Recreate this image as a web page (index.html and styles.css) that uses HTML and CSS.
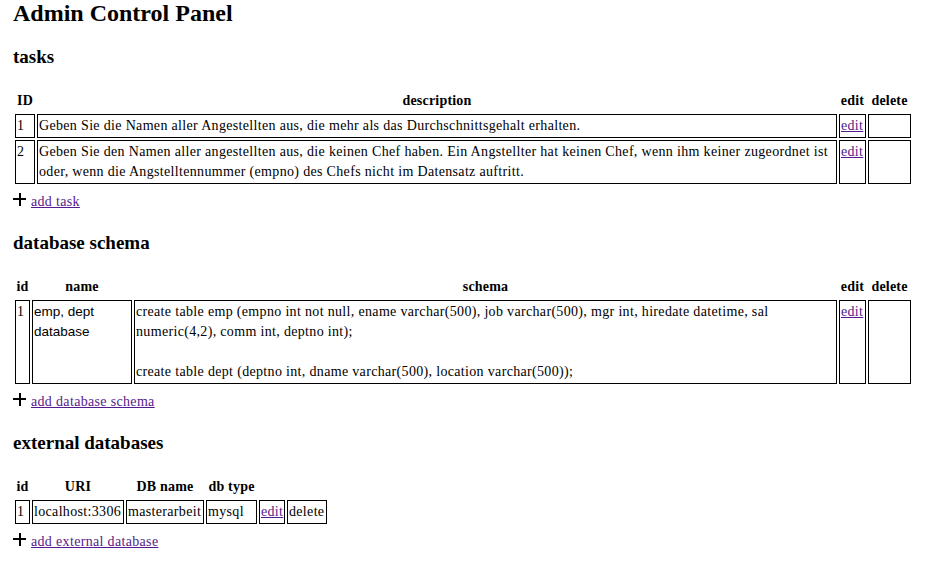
FILE: index.html
```html
<!DOCTYPE html>
<html lang="de">
<head>
<meta charset="utf-8">
<title>Admin Control Panel</title>
<link rel="stylesheet" href="styles.css">
</head>
<body>
<h1 class="title">Admin Control Panel</h1>

<h2 class="section-title">tasks</h2>
<table class="grid grid-wide">
  <thead>
    <tr>
      <th class="w-id1">ID</th>
      <th class="w-desc">description</th>
      <th class="w-edit">edit</th>
      <th class="w-del">delete</th>
    </tr>
  </thead>
  <tbody>
    <tr>
      <td>1</td>
      <td>Geben Sie die Namen aller Angestellten aus, die mehr als das Durchschnittsgehalt erhalten.</td>
      <td><a href="#" class="link">edit</a></td>
      <td></td>
    </tr>
    <tr>
      <td>2</td>
      <td>Geben Sie den Namen aller angestellten aus, die keinen Chef haben. Ein Angstellter hat keinen Chef, wenn ihm keiner zugeordnet ist oder, wenn die Angstelltennummer (empno) des Chefs nicht im Datensatz auftritt.</td>
      <td><a href="#" class="link">edit</a></td>
      <td></td>
    </tr>
  </tbody>
</table>
<p class="add"><svg class="plus" width="13" height="13" viewBox="0 0 13 13"><rect x="6" y="0" width="2" height="13" fill="#000"/><rect x="0" y="5" width="13" height="2" fill="#000"/></svg><a href="#" class="link">add task</a></p>

<h2 class="section-title">database schema</h2>
<table class="grid grid-wide">
  <thead>
    <tr>
      <th class="w-id2">id</th>
      <th class="w-name">name</th>
      <th>schema</th>
      <th class="w-edit">edit</th>
      <th class="w-del">delete</th>
    </tr>
  </thead>
  <tbody>
    <tr>
      <td>1</td>
      <td class="sans">emp, dept database</td>
      <td>create table emp (empno int not null, ename varchar(500), job varchar(500), mgr int, hiredate datetime, sal numeric(4,2), comm int, deptno int);<br><br>create table dept (deptno int, dname varchar(500), location varchar(500));</td>
      <td><a href="#" class="link">edit</a></td>
      <td></td>
    </tr>
  </tbody>
</table>
<p class="add"><svg class="plus" width="13" height="13" viewBox="0 0 13 13"><rect x="6" y="0" width="2" height="13" fill="#000"/><rect x="0" y="5" width="13" height="2" fill="#000"/></svg><a href="#" class="link">add database schema</a></p>

<h2 class="section-title">external databases</h2>
<table class="grid grid-small">
  <thead>
    <tr>
      <th class="w-id2">id</th>
      <th class="w-uri">URI</th>
      <th class="w-dbname">DB name</th>
      <th class="w-dbtype">db type</th>
      <th class="w-edit3"></th>
      <th class="w-del3"></th>
    </tr>
  </thead>
  <tbody>
    <tr>
      <td>1</td>
      <td>localhost:3306</td>
      <td>masterarbeit</td>
      <td>mysql</td>
      <td><a href="#" class="link">edit</a></td>
      <td>delete</td>
    </tr>
  </tbody>
</table>
<p class="add"><svg class="plus" width="13" height="13" viewBox="0 0 13 13"><rect x="6" y="0" width="2" height="13" fill="#000"/><rect x="0" y="5" width="13" height="2" fill="#000"/></svg><a href="#" class="link">add external database</a></p>
</body>
</html>
```

FILE: styles.css
```css
html {
  background: #fff;
}

body {
  margin: 0;
  padding: 0 12px 0 13px;
  font-family: "Liberation Serif", "Times New Roman", serif;
  font-size: 14px;
  line-height: 20px;
  letter-spacing: 0.33px;
  color: #000;
  background: #fff;
}

.title {
  margin: 0;
  font-size: 24px;
  line-height: 26px;
  font-weight: bold;
  letter-spacing: 0;
}

.section-title {
  margin: 21px 0 21px;
  font-size: 19px;
  line-height: 20px;
  font-weight: bold;
  letter-spacing: 0;
}

.grid {
  border-collapse: separate;
  border-spacing: 2px;
  table-layout: fixed;
}

.grid-wide {
  width: 900px;
}

.grid-small {
  width: 316px;
}

.grid th,
.grid td {
  box-sizing: border-box;
  padding: 1px;
}

.grid th {
  font-weight: bold;
  text-align: center;
  vertical-align: bottom;
  letter-spacing: 0.2px;
}

.grid td {
  border: 1px solid #000;
  text-align: left;
  vertical-align: top;
}

.w-id1 { width: 20px; }
.w-id2 { width: 15px; }
.w-desc { width: 800px; }
.w-name { width: 100px; }
.w-edit { width: 27px; }
.w-del { width: 43px; }
.w-uri { width: 92px; }
.w-dbname { width: 78px; }
.w-dbtype { width: 51px; }
.w-edit3 { width: 26px; }
.w-del3 { width: 40px; }

.sans {
  font-family: "Liberation Sans", Arial, sans-serif;
  font-size: 13.5px;
  letter-spacing: 0;
}

.link {
  color: #551a8b;
  text-decoration: underline;
}

.add {
  margin: 6px 0 0;
}

.plus {
  display: inline-block;
  vertical-align: baseline;
  margin-right: 5px;
}
```
